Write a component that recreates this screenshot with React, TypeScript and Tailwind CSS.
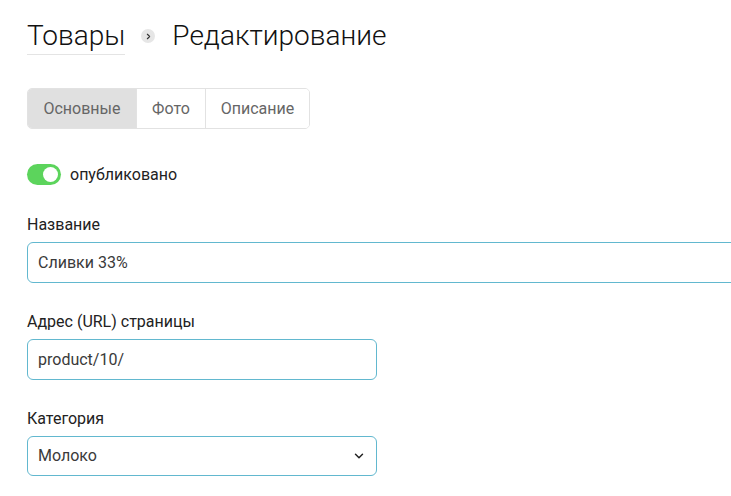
import { ChevronRight, ChevronDown } from "lucide-react";

const TABS = [
  { label: "Основные", w: "w-[108px]" },
  { label: "Фото", w: "w-[69px]" },
  { label: "Описание", w: "w-[104px]" },
];

function Field({ label, children }: { label: string; children: React.ReactNode }) {
  return (
    <div className="flex flex-col gap-[8px]">
      <label className="text-[16px] leading-[19px] text-[#222]">{label}</label>
      {children}
    </div>
  );
}

export default function App() {
  return (
    <div
      className="w-[731px] h-[496px] overflow-hidden bg-white pl-[27px] pt-[18px]"
      style={{ fontFamily: "Roboto, 'Liberation Sans', sans-serif" }}
    >
      <div className="flex items-center h-[36px]">
        <a className="text-[28px] leading-[36px] text-[#111] font-light border-b border-[#e4e4e4]">
          Товары
        </a>
        <span className="ml-[16px] mr-[17px] w-[14px] h-[14px] rounded-full bg-[#e6e6e6] flex items-center justify-center">
          <ChevronRight size={9} strokeWidth={3} className="text-[#333]" />
        </span>
        <h1 className="text-[28px] leading-[36px] text-[#111] font-light">Редактирование</h1>
      </div>

      <div className="mt-[34px] inline-flex h-[41px] rounded-[5px] border border-[#e2e2e2] overflow-hidden">
        {TABS.map((t, i) => (
          <button
            key={t.label}
            className={
              i === 0
                ? `${t.w} text-center text-[16px] text-[#666] bg-[#e0e0e0]`
                : `${t.w} text-center text-[16px] text-[#666] bg-white border-l border-[#e2e2e2]`
            }
          >
            {t.label}
          </button>
        ))}
      </div>

      <div className="mt-[35px] flex items-center h-[21px] gap-[9px]">
        <span className="w-[34px] h-[21px] rounded-full bg-[#5cd45c] flex items-center justify-end pr-[3px]">
          <span className="w-[15px] h-[15px] rounded-full bg-white" />
        </span>
        <span className="text-[16px] text-[#222]">опубликовано</span>
      </div>

      <div className="mt-[30px] flex flex-col gap-[29px]">
        <Field label="Название">
          <div className="w-[760px] h-[41px] rounded-[6px] border border-[#62b8cf] flex items-center px-[10px] text-[16px] text-[#3a3a3a]">
            Сливки 33%
          </div>
        </Field>
        <Field label="Адрес (URL) страницы">
          <div className="w-[350px] h-[41px] rounded-[6px] border border-[#62b8cf] flex items-center px-[10px] text-[16px] text-[#3a3a3a]">
            product/10/
          </div>
        </Field>
        <Field label="Категория">
          <div className="w-[350px] h-[40px] rounded-[6px] border border-[#62b8cf] flex items-center justify-between pl-[10px] pr-[10px] text-[16px] text-[#3a3a3a]">
            <span>Молоко</span>
            <ChevronDown size={14} strokeWidth={2.5} className="text-[#222]" />
          </div>
        </Field>
      </div>
    </div>
  );
}
